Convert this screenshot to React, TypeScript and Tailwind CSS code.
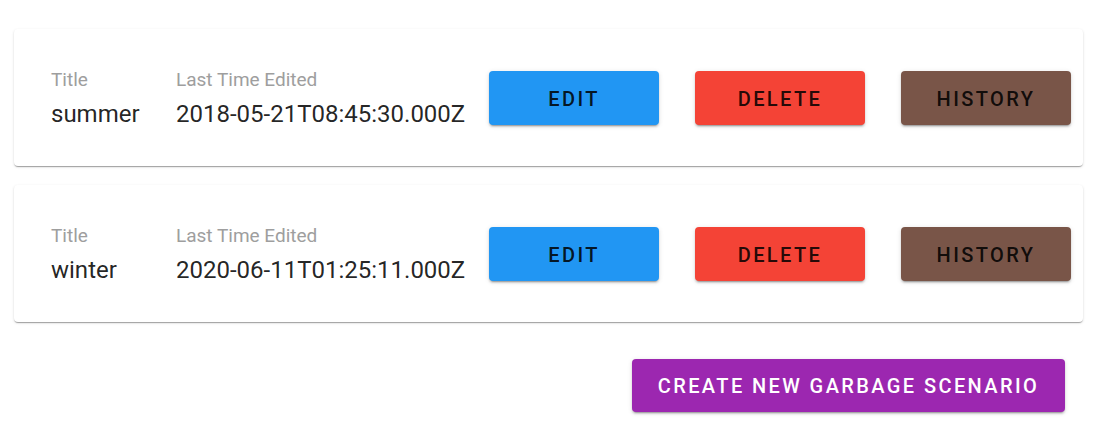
const scenarios = [
  { title: "summer", edited: "2018-05-21T08:45:30.000Z" },
  { title: "winter", edited: "2020-06-11T01:25:11.000Z" },
];

const shadow = "shadow-[0_2px_1px_-1px_rgba(0,0,0,0.2),0_1px_1px_0_rgba(0,0,0,0.14),0_1px_3px_0_rgba(0,0,0,0.12)]";
const btnShadow = "shadow-[0_3px_1px_-2px_rgba(0,0,0,0.2),0_2px_2px_0_rgba(0,0,0,0.14),0_1px_5px_0_rgba(0,0,0,0.12)]";

function ActionButton({ label, color }: { label: string; color: string }) {
  return (
    <button
      className={`flex h-[54px] w-[170px] shrink-0 items-center justify-center rounded-[4px] pt-[2px] text-[20px] font-medium uppercase tracking-[0.12em] text-[rgba(0,0,0,0.87)] ${color} ${btnShadow}`}
    >
      {label}
    </button>
  );
}

function ScenarioCard({ title, edited }: { title: string; edited: string }) {
  return (
    <div className={`flex h-[137px] items-center rounded-[4px] bg-white pl-[37px] pr-[12px] pt-[3px] ${shadow}`}>
      <div className="w-[125px] shrink-0">
        <div className="text-[19px] leading-[24px] text-[#9e9e9e]">Title</div>
        <div className="mt-[6px] text-[24px] leading-[32px] text-[rgba(0,0,0,0.87)]">{title}</div>
      </div>
      <div className="w-[313px] shrink-0">
        <div className="text-[19px] leading-[24px] text-[#9e9e9e]">Last Time Edited</div>
        <div className="mt-[6px] text-[24px] leading-[32px] text-[rgba(0,0,0,0.87)]">{edited}</div>
      </div>
      <div className="-mt-[3px] flex gap-[36px]">
        <ActionButton label="Edit" color="bg-[#2196f3]" />
        <ActionButton label="Delete" color="bg-[#f44336]" />
        <ActionButton label="History" color="bg-[#795548]" />
      </div>
    </div>
  );
}

export default function App() {
  return (
    <div className="min-h-screen bg-white px-[14px] pt-[29px] font-['Roboto',sans-serif] text-[#222]" style={{ width: 1108 }}>
      <div className="flex w-[1069px] flex-col gap-[19px]">
        {scenarios.map((s) => (
          <ScenarioCard key={s.title} title={s.title} edited={s.edited} />
        ))}
      </div>
      <div className="mt-[37px] flex w-[1051px] justify-end">
        <button
          className={`flex h-[53px] w-[433px] items-center justify-center rounded-[4px] bg-[#9c27b0] text-[20px] font-medium uppercase tracking-[0.12em] text-white ${btnShadow}`}
        >
          Create new garbage scenario
        </button>
      </div>
    </div>
  );
}
